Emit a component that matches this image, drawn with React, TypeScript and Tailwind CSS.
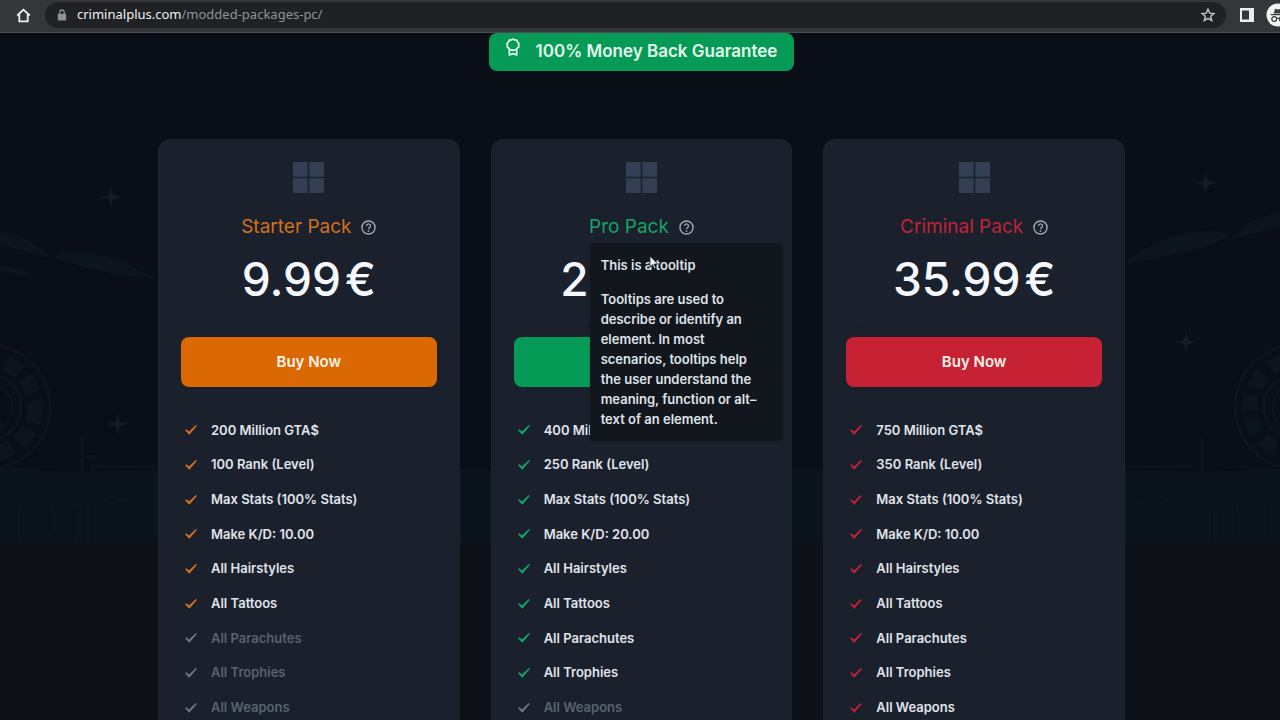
import clsx from "clsx";

type Tone = "orange" | "green" | "red";

type Pack = {
  name: string;
  price: string;
  tone: Tone;
  included: number;
  features: string[];
  tooltip?: boolean;
};

const tones: Record<Tone, { text: string; button: string }> = {
  orange: { text: "text-[#d3701c]", button: "bg-[#da6803]" },
  green: { text: "text-[#17a367]", button: "bg-[#059b57]" },
  red: { text: "text-[#c32236]", button: "bg-[#c62233]" },
};

const extras = ["All Hairstyles", "All Tattoos", "All Parachutes", "All Trophies", "All Weapons"];

const packs: Pack[] = [
  {
    name: "Starter Pack",
    price: "9.99",
    tone: "orange",
    included: 6,
    features: ["200 Million GTA$", "100 Rank (Level)", "Max Stats (100% Stats)", "Make K/D: 10.00", ...extras],
  },
  {
    name: "Pro Pack",
    price: "24.99",
    tone: "green",
    included: 8,
    features: ["400 Million GTA$", "250 Rank (Level)", "Max Stats (100% Stats)", "Make K/D: 20.00", ...extras],
    tooltip: true,
  },
  {
    name: "Criminal Pack",
    price: "35.99",
    tone: "red",
    included: 9,
    features: ["750 Million GTA$", "350 Rank (Level)", "Max Stats (100% Stats)", "Make K/D: 10.00", ...extras],
  },
];

function WindowsLogo() {
  return (
    <svg viewBox="0 0 31 31" className="size-[31px] fill-[#333f52]" aria-hidden="true">
      <path d="M0 0h14.7v14.7H0zM16.3 0H31v14.7H16.3zM0 16.3h14.7V31H0zM16.3 16.3H31V31H16.3z" />
    </svg>
  );
}

function CheckIcon({ className }: { className: string }) {
  return (
    <svg viewBox="0 0 12 12" className={clsx("size-3 shrink-0", className)} fill="currentColor" aria-hidden="true">
      <path d="M0 6.2l1.4-1L4 7.6 10.9 1l1.1.8-7.7 9z" />
    </svg>
  );
}

function HelpIcon() {
  return (
    <svg viewBox="0 0 16 16" className="size-[15px]" fill="none" stroke="currentColor" aria-hidden="true">
      <circle cx="8" cy="8" r="7" strokeWidth="1.5" />
      <path d="M5.9 6.3a2.1 2.1 0 1 1 3.2 1.8C8.3 8.6 8 8.9 8 9.7" strokeWidth="1.4" />
      <circle cx="8" cy="11.6" r=".9" fill="currentColor" stroke="none" />
    </svg>
  );
}

function AwardIcon() {
  return (
    <svg
      viewBox="0 0 14 18"
      className="mb-2.5 h-[18px] w-3.5"
      fill="none"
      stroke="currentColor"
      strokeWidth="1.7"
      strokeLinejoin="round"
      aria-hidden="true"
    >
      <path d="M7 1l1.7.9 2 .3.8 1.9L13 5.500 12.600 7.200l.2 1.900-1.700 1.100-1.100 1.600-2 .1-1 .6-1-.6-2-.1-1.100-1.600L1.200 9.100l.2-1.900L1 5.500l1.500-1.400.8-1.900 2-.3z" />
      <path d="M3.300 11.500V17L7 15.600l3.700 1.400v-5.500" />
    </svg>
  );
}

function BrowserBar() {
  return (
    <header className="relative z-20 flex h-[33px] shrink-0 items-start border-b border-[#4b4c50] bg-[#35363a] pt-0.5">
      <button aria-label="Home" className="ml-4 flex h-[26px] items-center text-[#f1f1f1]">
        <svg viewBox="0 0 15 15" className="size-[15px]" fill="none" aria-hidden="true">
          <path d="M1.2 7.5l6.3-5.800 6.300 5.800M3.300 6.500v6.800h8.400V6.500" stroke="currentColor" strokeWidth="1.8" />
        </svg>
      </button>
      <div className="ml-3.5 flex h-[26px] min-w-0 flex-1 items-center rounded-full bg-[#202124] pl-3 pr-2.5 font-['Noto_Sans','Open_Sans',sans-serif] text-[13px]">
        <svg viewBox="0 0 10 12" className="h-3 w-2.5 shrink-0" aria-hidden="true">
          <path d="M.8 4.8h8.4v6.7H.8z" fill="#8e9094" />
          <path d="M2.8 5V3.200a2.200 2.200 0 0 1 4.400 0V5" fill="none" stroke="#8e9094" strokeWidth="1.3" />
        </svg>
        <a href="#packs" className="ml-2.5 flex-1 truncate text-[#8f9296]">
          <span className="text-[#eff0f1]">criminalplus.com</span>/modded-packages-pc/
        </a>
        <button aria-label="Bookmark this page" className="text-[#c9cacc]">
          <svg viewBox="0 0 16 16" className="size-4" fill="none" stroke="currentColor" aria-hidden="true">
            <path
              d="M8 2.200l1.700 3.900 4.200.4-3.200 2.800 1 4.200L8 11.300l-3.700 2.200 1-4.200L2.100 6.500l4.200-.4z"
              strokeWidth="1.4"
            />
          </svg>
        </button>
      </div>
      <div className="ml-3.5 flex h-[26px] w-10 shrink-0 items-center gap-3 overflow-hidden">
        <button aria-label="Side panel" className="shrink-0">
          <svg viewBox="0 0 14 14" className="size-3.5" aria-hidden="true">
            <path d="M0 0h14v14H0z" fill="#ededf0" />
            <path d="M2 2.500h7v9H2z" fill="#35363a" />
          </svg>
        </button>
        <button aria-label="Incognito" className="shrink-0">
          <svg viewBox="0 0 24 24" className="size-6" aria-hidden="true">
            <circle cx="12" cy="12" r="11.5" fill="#f4f4f5" />
            <path d="M7.500 10.500l1.700-4.700 2.800.8 2.800-.8 1.700 4.700zM4.500 11h15v1.300h-15z" fill="#3c3d41" />
            <g fill="none" stroke="#3c3d41" strokeWidth="1.2">
              <circle cx="8.2" cy="16" r="2.4" />
              <circle cx="15.8" cy="16" r="2.4" />
              <path d="M10.600 15.600q1.400-.8 2.800 0" />
            </g>
          </svg>
        </button>
      </div>
    </header>
  );
}

const star = "M0-14Q.6-3 2.5-2.3 4-1 13 0 4 1 2.5 2.3.6 3 0 15-.6 3-2.5 2.3-4 1-13 0-4-1-2.5-2.3-.6-3 0-14z";

function Wheel({ cx }: { cx: number }) {
  return (
    <g fill="none" stroke="#0c151b">
      <circle cx={cx} cy={374} r={62} strokeWidth={3} />
      <circle cx={cx} cy={374} r={47} strokeWidth={16} strokeDasharray="16 8" />
      <circle cx={cx} cy={374} r={33} strokeWidth={3} />
      <circle cx={cx} cy={374} r={24} strokeWidth={2} />
    </g>
  );
}

// Night pier: stars, clouds and two ferris wheels
function Skyline() {
  return (
    <svg
      viewBox="0 0 1280 687"
      preserveAspectRatio="xMidYMid slice"
      className="absolute inset-0 size-full"
      aria-hidden="true"
    >
      <path d="M0 508h1280v179H0z" fill="#0d1117" />
      <path d="M0 436l22-2 24 4 37 1 75-2h964l80 2 78-3v74H0z" fill="#0c141b" />
      <g fill="#0d151c">
        <path d="M0 200c20 0 40 12 51 25-19-3-33-10-51-13zM53 224c10-8 44-5 66 3 17 7 24 14 39 18-38 1-80-12-105-21zM0 233c14 0 22 5 35 11-15-1-22-4-35-7z" />
        <path d="M1125 231c31-32 90-39 105-28-30 17-75 22-105 28zM1231 206c14-18 34-25 49-26v12c-16 6-30 10-49 14z" />
        <path d="M81 404h3v38h-3zM86 422h9v3h-9zM1201 404h2v38h-2zM90 433h66v2H90zM1125 433h66v2h-66z" />
      </g>
      <Wheel cx={-12} />
      <Wheel cx={1297} />
      <g fill="#0a1017">
        <path d="M16 470h2v40h-2zM22 476h1v31h-1zM48 472h2v26h-2zM65 476h1v31h-1zM72 474h3v34h-3zM81 472h3v38h-3zM92 470h2v37h-2z" />
        <path d="M1211 474h2v34h-2zM1219 480h1v27h-1zM1225 476h1v31h-1zM1234 472h2v34h-2zM1268 470h2v36h-2z" />
        <path d="M98 465h5v3h-5zM109 466h6v3h-6zM121 460h8v5h-8zM1140 464h6v2h-6zM1158 465h6v3h-6zM1182 467h5v3h-5z" />
      </g>
      <g fill="#151c25">
        <path d={star} transform="translate(111 164)" />
        <path d={star} transform="translate(118 391)" />
        <path d={star} transform="translate(1206 150)" />
        <path d={star} transform="translate(1186 309)" />
      </g>
    </svg>
  );
}

function Tooltip() {
  return (
    <div
      role="tooltip"
      id="pack-tooltip"
      className="absolute left-[98px] top-[103px] z-10 w-[193px] rounded-sm bg-[#11171d] px-[11px] py-3 text-left text-[13px]/5 font-semibold text-[#dfe3e8] shadow-sm"
    >
      <p className="mb-3.5">This is a tooltip</p>
      <p>
        Tooltips are used to
        <br />
        describe or identify an
        <br />
        element. In most
        <br />
        scenarios, tooltips help
        <br />
        the user understand the
        <br />
        meaning, function or alt–
        <br />
        text of an element.
      </p>
      <svg viewBox="0 0 12 18" className="absolute left-[59px] top-3 h-[18px] w-3" aria-hidden="true">
        <path d="M1 1v11l2.5-2.3 1.800 4 1.500-.8-1.700-3.800h3.600z" fill="#f3f4f6" stroke="#11171d" strokeWidth="0.8" />
      </svg>
    </div>
  );
}

function PackCard({ pack }: { pack: Pack }) {
  const tone = tones[pack.tone];

  return (
    <article className="relative rounded-xl border border-[#1c232e] bg-[#1a212d] px-[22px] pb-10 pt-[22px]">
      <div className="flex flex-col items-center">
        <WindowsLogo />
        <div className="mt-5 flex h-7 items-center gap-2.5">
          <h2 className={clsx("text-[19px]", tone.text)}>{pack.name}</h2>
          <button
            aria-label={`About ${pack.name}`}
            aria-describedby={pack.tooltip ? "pack-tooltip" : undefined}
            className="text-[#a3a9b3]"
          >
            <HelpIcon />
          </button>
        </div>
        <p className="mt-2 flex gap-1 text-[46px]/[60px] font-medium text-[#f5f8ff]">
          {pack.price}
          <span>€</span>
        </p>
      </div>
      <hr className="mx-3 mt-3 border-[#1f2632]" />
      <button
        className={clsx("mt-[15px] h-[50px] w-full rounded-lg text-[15px] font-semibold text-[#fbf3ea]", tone.button)}
      >
        Buy Now
      </button>
      <ul className="mt-[26px] grid h-[312px] grid-rows-9">
        {pack.features.map((feature, i) => (
          <li
            key={feature}
            className={clsx(
              "flex items-center gap-3.5 pl-1 text-[13px] font-semibold",
              i < pack.included ? "text-[#e0e4ea]" : "text-[#596270]"
            )}
          >
            <CheckIcon className={i < pack.included ? tone.text : "text-[#6d7581]"} />
            {feature}
          </li>
        ))}
      </ul>
      {pack.tooltip && <Tooltip />}
    </article>
  );
}

export default function App() {
  return (
    <div className="flex h-screen flex-col overflow-hidden bg-[#0a0e16] font-['Inter',sans-serif]">
      <BrowserBar />
      <main className="relative min-h-0 flex-1 overflow-hidden pl-[3px]">
        <Skyline />
        <div className="relative">
          <div className="mx-auto flex h-[38px] w-fit items-center gap-4 rounded-lg bg-[#059b57] px-[17px] text-[#e3f6ea]">
            <AwardIcon />
            <span className="text-[17px] font-semibold">100% Money Back Guarantee</span>
          </div>
          <section id="packs" className="mx-auto mt-[68px] grid max-w-[967px] grid-cols-3 gap-[31px]">
            {packs.map((pack) => (
              <PackCard key={pack.name} pack={pack} />
            ))}
          </section>
        </div>
      </main>
    </div>
  );
}
